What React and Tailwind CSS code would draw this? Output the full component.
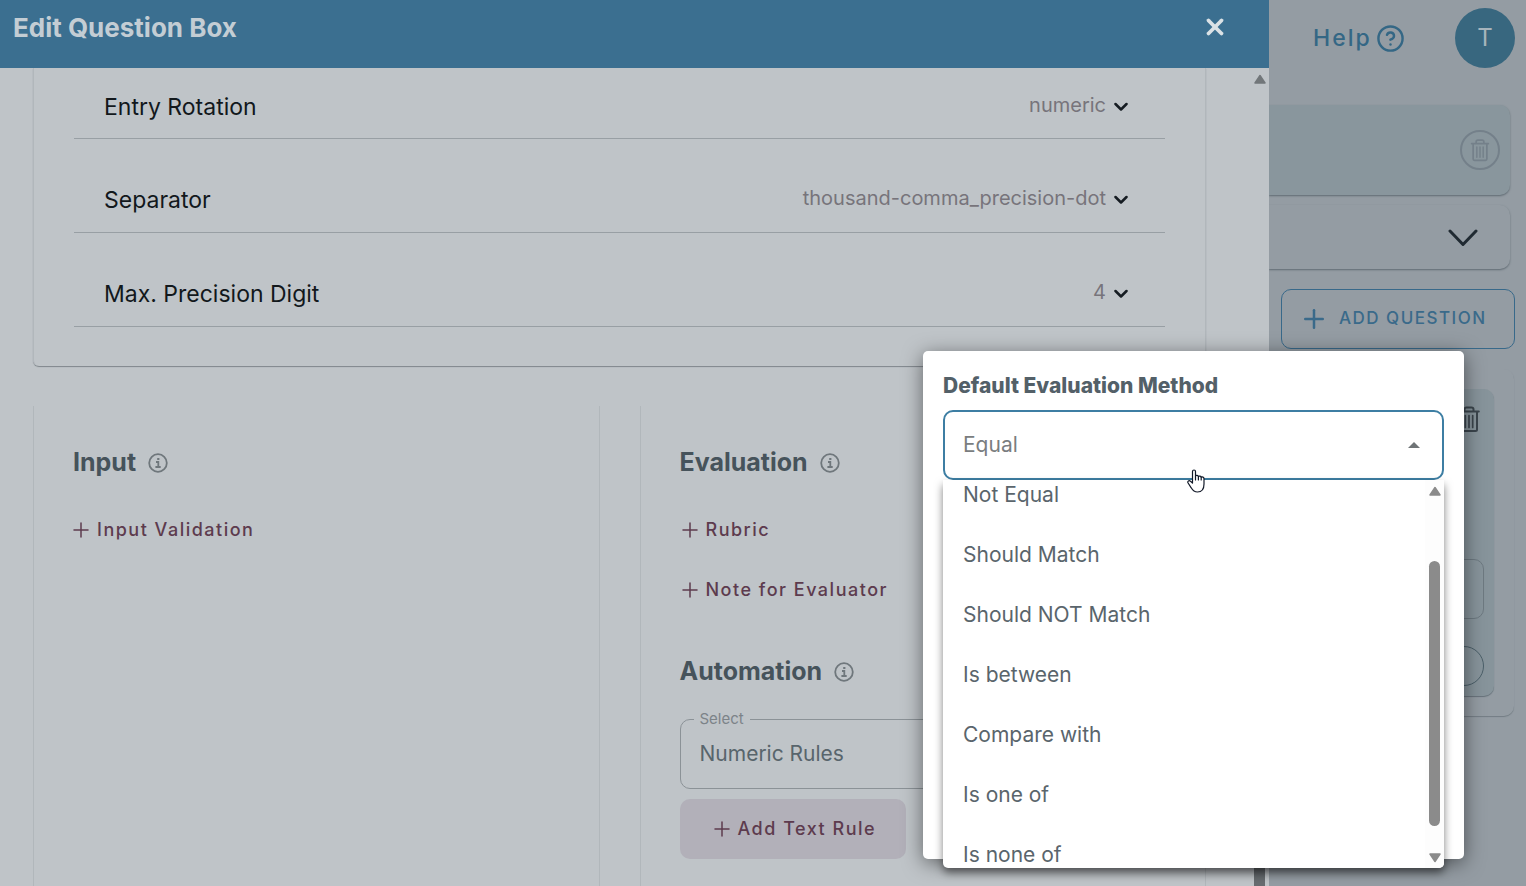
import React, { useState } from "react";
import { CircleQuestionMark, Plus, X } from "lucide-react";

const settings = [
  { id: "rotation", label: "Entry Rotation", value: "numeric", first: true },
  { id: "separator", label: "Separator", value: "thousand-comma_precision-dot" },
  { id: "precision", label: "Max. Precision Digit", value: "4" },
];

const methods = [
  "Not Equal",
  "Should Match",
  "Should NOT Match",
  "Is between",
  "Compare with",
  "Is one of",
  "Is none of",
];

function InfoIcon() {
  return (
    <svg viewBox="0 0 20 20" className="mt-0.5 size-5" fill="none" stroke="currentColor" strokeWidth="1.8">
      <circle cx="10" cy="10" r="8.8" />
      <path d="M8 9h2.300v5M7.400 14h5.300" />
      <path d="M9.200 6h2.200" strokeWidth="2" />
    </svg>
  );
}

function TrashIcon({ className }) {
  return (
    <svg viewBox="0 0 22 28" className={className} fill="none" stroke="currentColor" strokeWidth="2" strokeLinecap="round" strokeLinejoin="round">
      <path d="M1.200 6.500h19.600M3 7v17.500a1.500 1.500 0 0 0 1.500 1.500h13a1.500 1.500 0 0 0 1.500-1.500V7M6.500 6V4.500a2 2 0 0 1 2-2h5a2 2 0 0 1 2 2V6" />
      <path d="M7.300 10.500v12M11 10.500v12M14.700 10.500v12" strokeWidth="1.700" />
    </svg>
  );
}

function Heading({ children }) {
  return (
    <div className="flex h-8 items-center gap-3 text-[#6f777c]">
      <h2 className="text-[25px] leading-8 font-bold text-[#46535b]">{children}</h2>
      <InfoIcon />
    </div>
  );
}

function AddLink({ children }) {
  return (
    <button className="-ml-1 flex h-[60px] items-center gap-1 text-lg font-medium tracking-[1.5px] text-[#5d3b4e]">
      <Plus size={24} strokeWidth={1.5} />
      {children}
    </button>
  );
}

function SettingRow({ id, label, value, first }) {
  return (
    <div className={`flex items-end justify-between border-b border-[#989fa4] pr-[37px] pl-[30px] ${first ? "h-[71px] pb-[15px]" : "h-[94px] pb-4"}`}>
      <label htmlFor={id} className="text-[23px] leading-8 text-[#12181c]">{label}</label>
      <div className="flex items-center gap-2 pb-1 text-[#151c22]">
        <select id={id} className="appearance-none text-right text-xl leading-7 text-[#77747b] outline-none">
          <option>{value}</option>
        </select>
        <svg viewBox="0 0 14 10" className="mt-1 h-2.5 w-3.5" fill="none" stroke="currentColor" strokeWidth="2.5" strokeLinecap="round" strokeLinejoin="round">
          <path d="M1.500 2 7 7.500 12.500 2" />
        </svg>
      </div>
    </div>
  );
}

function Arrow({ down }) {
  return (
    <svg viewBox="0 0 12 10" className={`h-2.5 w-3 ${down ? "rotate-180" : ""}`} fill="currentColor" stroke="currentColor" strokeWidth="1.500" strokeLinejoin="round">
      <path d="M6 1.500 11 9H1z" />
    </svg>
  );
}

function Drawer() {
  return (
    <main className="z-10 flex min-w-0 flex-1 flex-col bg-[#bfc4c8]">
      <header className="flex h-[68px] shrink-0 items-start justify-between bg-[#3b6f90] pt-3 pr-[41px] pl-[13px] text-[#c3cdd4]">
        <h1 className="text-[26px] leading-8 font-bold">Edit Question Box</h1>
        <button aria-label="Close" className="pt-0.5 text-[#dbe2e6]">
          <X size={26} strokeWidth={3.5} />
        </button>
      </header>

      <div className="flex min-h-0 flex-1">
        <div className="flex min-w-0 flex-1 flex-col gap-10 pr-12 pl-[33px]">
          <section className="rounded-b-md border-x border-[#b1b7bb] px-10 pb-[39px] shadow-[0_1px_1px_#7f868b]">
            {settings.map((s) => (
              <SettingRow key={s.id} {...s} />
            ))}
          </section>

          <div className="grid min-h-0 flex-1 grid-cols-2 gap-10">
            <section className="border-x border-[#b1b7bb] px-[39px] pt-10">
              <Heading>Input</Heading>
              <div className="pt-[22px]">
                <AddLink>Input Validation</AddLink>
              </div>
            </section>

            <section className="border-x border-[#b1b7bb] px-[39px] pt-10">
              <Heading>Evaluation</Heading>
              <div className="pt-[22px] pb-[35px] pl-0.5">
                <AddLink>Rubric</AddLink>
                <AddLink>Note for Evaluator</AddLink>
              </div>
              <Heading>Automation</Heading>
              <div className="relative mt-8 mb-2.5">
                <label htmlFor="rules" className="absolute -top-3 left-3.5 bg-[#bfc4c8] px-1.5 text-[15px] leading-6 text-[#7c8388]">Select</label>
                <select id="rules" className="h-[70px] w-full appearance-none rounded-[10px] border border-[#8b9297] pl-[19px] text-[21px] text-[#58656c] outline-none">
                  <option>Numeric Rules</option>
                </select>
              </div>
              <button className="flex h-[60px] items-center gap-1 rounded-[10px] bg-[#b2b0b9] px-[30px] text-lg font-medium tracking-[1.5px] text-[#5d3b4e]">
                <Plus size={24} strokeWidth={1.5} />
                Add Text Rule
              </button>
            </section>
          </div>
        </div>

        <div className="flex w-[15px] flex-col items-start justify-between pt-1.5 text-[#72777a]">
          <Arrow />
          <div className="h-5 w-[11px] bg-[#676c70]" />
        </div>
      </div>
    </main>
  );
}

function QuestionList() {
  return (
    <aside className="flex w-[257px] shrink-0 flex-col bg-[#949ca3]">
      <div className="flex h-[105px] items-start justify-between pt-2 pr-[11px] pl-11">
        <a href="#help" className="flex h-[60px] items-center gap-1 text-[23px] font-medium tracking-[2px] text-[#346785]">
          Help
          <CircleQuestionMark size={29} strokeWidth={2} />
        </a>
        <button className="size-[60px] rounded-full bg-[#38677f] text-2xl text-[#a7b4bc]">T</button>
      </div>

      <div className="mr-4 flex h-[90px] items-center justify-end rounded-r-[10px] bg-[#89969d] pr-2.5 shadow-[0_1px_2px_#5f6a72]">
        <button aria-label="Delete section" className="flex size-10 items-center justify-center rounded-full border-2 border-[#74808a] text-[#74808a]">
          <TrashIcon className="h-6 w-5" />
        </button>
      </div>

      <div className="mt-2.5 mr-4 flex h-16 items-center justify-end rounded-r-[10px] pr-8 shadow-[0_1px_2px_#5f6a72]">
        <button aria-label="Expand" className="pt-0.5 text-[#202a32]">
          <svg viewBox="0 0 30 18" className="h-[18px] w-[30px]" fill="none" stroke="currentColor" strokeWidth="3" strokeLinecap="round" strokeLinejoin="round">
            <path d="M2 2 15 15.500 28 2" />
          </svg>
        </button>
      </div>

      <button className="mt-5 mr-[11px] ml-3 flex h-[60px] items-center gap-2.5 rounded-[10px] border border-[#38698a] pl-[17px] text-[17px] font-medium tracking-[1.5px] text-[#3a6a8a]">
        <Plus size={30} strokeWidth={2} />
        ADD QUESTION
      </button>

      <div className="mt-5 mr-3 rounded-r-[10px] py-5 pr-5 shadow-[0_1px_1px_#737d84]">
        <div className="flex h-[307px] flex-col items-end rounded-r-[10px] bg-[#87949b] pr-2.5 shadow-[0_1px_1px_#66727a]">
          <button aria-label="Delete question" className="mt-4 mr-1 text-[#3b454d]">
            <TrashIcon className="h-7 w-[22px]" />
          </button>
          <input aria-label="Question" className="mt-[126px] h-[60px] w-40 rounded-[10px] border border-[#6d7981]" />
          <button aria-label="Question options" className="mt-[27px] h-10 w-20 rounded-full border border-[#4b5f69]" />
        </div>
      </div>
    </aside>
  );
}

function Cursor() {
  return (
    <svg viewBox="0 0 18 24" className="pointer-events-none absolute top-[118px] left-[264px] h-6 w-[18px]" fill="white" stroke="#111827" strokeWidth="1.200" strokeLinecap="round" strokeLinejoin="round">
      <path d="M5.500 14V2.500a1.500 1.500 0 0 1 3 0V7c.5-1 2.700-.8 2.900.5.700-.8 2.600-.5 2.800.8 1-.7 2.800-.2 2.800 1.400v5.300c0 5-2.500 8-6.500 8-3.500 0-4.800-1.600-6.300-4.200L1.100 14c-1-2 1-3 2.400-1.700z" />
      <path d="M8.500 7v4M11.400 7.500V11M14.200 8.500V11" fill="none" />
    </svg>
  );
}

function MethodPopover() {
  const [method, setMethod] = useState("Equal");

  return (
    <div className="absolute top-[351px] right-[62px] z-20 h-[508px] w-[541px] rounded-[5px] bg-white px-5 pt-5 shadow-[0_4px_20px_rgba(0,0,0,0.5)]">
      <label htmlFor="method" className="block text-[21px] leading-[30px] font-extrabold text-[#536068]">Default Evaluation Method</label>
      <div className="relative mt-[9px]">
        <select
          id="method"
          value={method}
          onChange={(e) => setMethod(e.target.value)}
          className="h-[70px] w-full appearance-none rounded-[10px] border-2 border-[#3d7ea3] pl-[18px] text-[21px] text-[#7a7d80] outline-none"
        >
          <option>Equal</option>
          {methods.map((m) => (
            <option key={m}>{m}</option>
          ))}
        </select>
        <svg viewBox="0 0 12 6" className="pointer-events-none absolute top-8 right-6 h-1.5 w-3 text-[#6f7476]" fill="currentColor">
          <path d="M6 0 12 6H0z" />
        </svg>

        {/* Option list, scrolled to its end */}
        <div className="absolute inset-x-0 top-full flex h-[388px] justify-between overflow-hidden rounded-b-[5px] bg-white shadow-[0_5px_8px_rgba(0,0,0,0.5)]">
          <ul role="listbox" aria-label="Methods" className="flex-1 pl-5 text-[21px] leading-[30px] text-[#5a656c]">
            {methods.map((m) => (
              <li key={m} role="option" aria-selected={m === method} onClick={() => setMethod(m)} className="cursor-pointer pb-[30px]">
                {m}
              </li>
            ))}
          </ul>
          <div className="flex w-[19px] flex-col items-center bg-[#fdfdfd] pt-1.5 pb-[5px] text-[#8b8b8b]">
            <Arrow />
            <div className="mt-[65px] h-[265px] w-[11px] rounded-full bg-[#8b8b8b]" />
            <div className="mt-auto">
              <Arrow down />
            </div>
          </div>
        </div>
      </div>
      <Cursor />
    </div>
  );
}

export default function App() {
  return (
    <div className="relative flex h-screen overflow-hidden font-[Inter,sans-serif]">
      <Drawer />
      <QuestionList />
      <MethodPopover />
    </div>
  );
}
